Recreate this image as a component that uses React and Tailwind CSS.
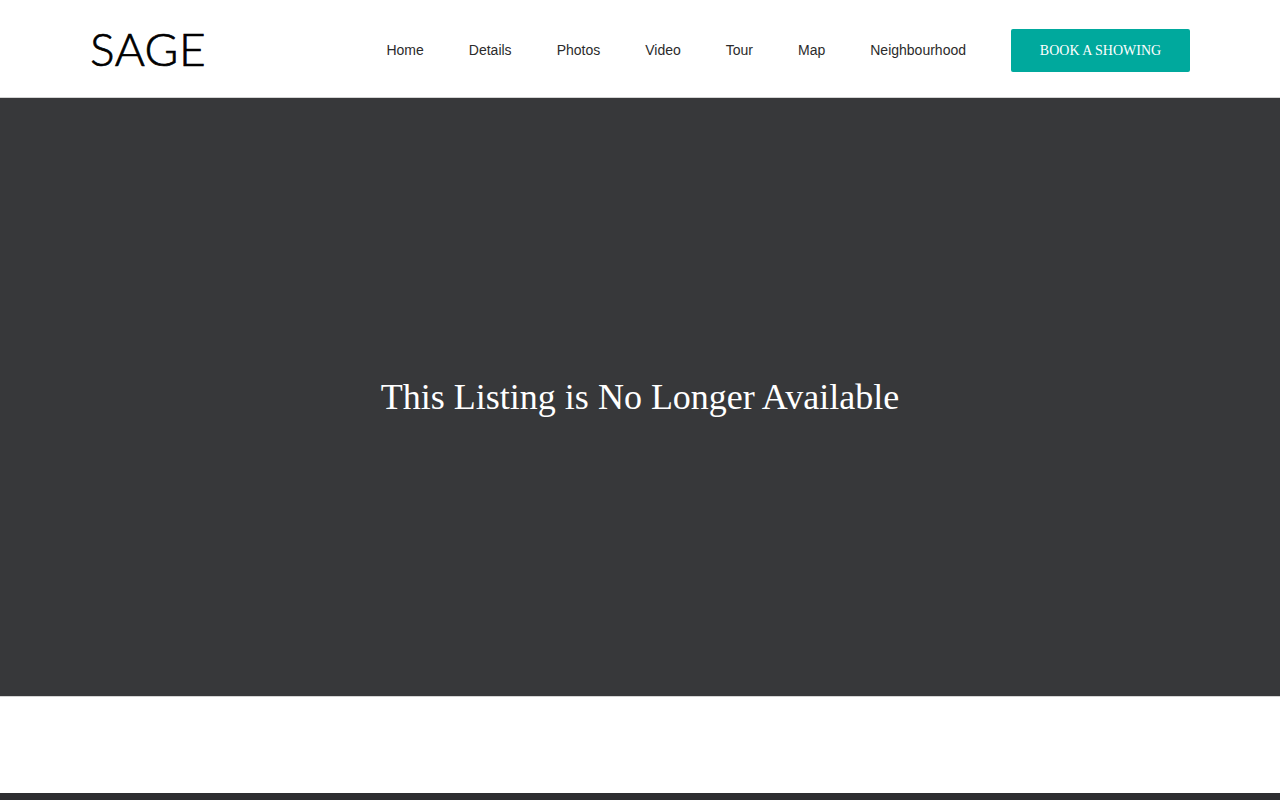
import React from 'react';

const navLinks = ['Home', 'Details', 'Photos', 'Video', 'Tour', 'Map', 'Neighbourhood'];

const Header = () => (
  <header className="h-[98px] bg-white border-b border-[#d4d4d4] px-[90px] flex items-center justify-between">
    <a href="#" className="font-['Lato',sans-serif] font-light text-[46px] leading-none text-black tracking-[0.5px] [-webkit-text-stroke:0.7px_black]">SAGE</a>
    <div className="flex items-center gap-[45px] pt-[4px]">
      <nav className="flex items-center gap-[45px] mb-[2px]">
        {navLinks.map((link) => (
          <a key={link} href="#" className="font-['Liberation_Sans',sans-serif] text-sm text-[#2b2b2b]">
            {link}
          </a>
        ))}
      </nav>
      <button className="w-[179px] h-[43px] bg-[#00a99d] rounded-[2px] font-['Liberation_Serif',serif] text-sm text-white">
        BOOK A SHOWING
      </button>
    </div>
  </header>
);

export default function App() {
  return (
    <div className="h-screen overflow-hidden bg-white">
      <Header />
      <main className="h-[598px] bg-[#37383a] flex items-center justify-center">
        <h1 className="font-['Liberation_Serif',serif] text-[36px] leading-none text-white">
          This Listing is No Longer Available
        </h1>
      </main>
      <div className="h-[97px] bg-white border-t border-[#d4d4d4]" />
      <footer className="h-[7px] bg-[#2d2e30]" />
    </div>
  );
}
